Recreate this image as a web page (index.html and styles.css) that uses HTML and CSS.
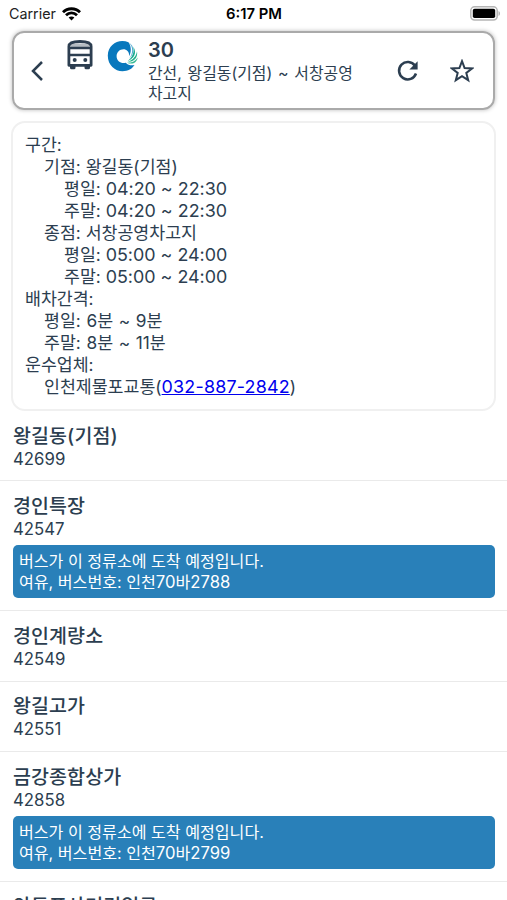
FILE: index.html
```html
<!DOCTYPE html>
<html lang="ko">
<head>
<meta charset="utf-8">
<title>30</title>
<link rel="stylesheet" href="styles.css">
</head>
<body>
<div class="status">
  <div class="carrier">Carrier
    <svg width="19" height="14" viewBox="0 0 19 14"><g fill="none" stroke="#000" stroke-width="2.8"><path d="M1 5.2C5.5.6 13.500.6 18 5.200"/><path d="M4 8.300c3.200-3.200 7.800-3.200 11 0"/></g><path d="M6.600 10.500c1.600-1.500 4.200-1.500 5.800 0L9.500 13.600z"/></svg>
  </div>
  <div class="clock">6:17 PM</div>
  <svg class="battery" width="31" height="15" viewBox="0 0 31 15"><rect x=".8" y=".8" width="26.400" height="13.200" rx="3.800" fill="#fff" stroke="#b5b5b5" stroke-width="1.500"/><rect x="2.800" y="2.800" width="22.400" height="9.200" rx="1.800"/><path d="M28.500 5c2 .7 2 4.300 0 5z" fill="#b5b5b5"/></svg>
</div>
<header class="header">
  <svg class="back" width="14" height="22" viewBox="0 0 14 22"><path d="M12 2 3 11l9 9" fill="none" stroke="#2c3e50" stroke-width="2.500"/></svg>
  <svg class="bus" width="26" height="30" viewBox="0 0 26 30"><path d="M3 24h5.500v3.800a1.500 1.500 0 0 1-1.500 1.500H4.500A1.500 1.500 0 0 1 3 27.800zM17.500 24H23v3.800a1.500 1.500 0 0 1-1.500 1.500H19a1.500 1.500 0 0 1-1.500-1.500z" fill="#2c3e50"/><path d="M1.900 25.300V6.500C1.900 2.800 5 1.500 13 1.500S24.100 2.800 24.100 6.500v18.800z" fill="#fff" stroke="#2c3e50" stroke-width="2.800" stroke-linejoin="round"/><path d="M4 5C6 3 20 3 22 5v2.500H4z" fill="#2c3e50" opacity=".35"/><path d="M2 8h22M2 15h22" stroke="#2c3e50" stroke-width="2.600"/><circle cx="7.700" cy="20" r="2" fill="#2c3e50"/><circle cx="18.300" cy="20" r="2" fill="#2c3e50"/></svg>
  <svg class="logo" width="32" height="32" viewBox="0 0 32 32"><path d="M21.500 2.200C12-1.800 1 4 .800 15.500.7 25 8 31.200 15.500 31.200c5.500 0 9.800-2.400 12-6.200-3.500.8-6.500 0-8.700-2.300-4.500 1.500-9.200-1.700-9.200-6.500 0-4.200 3.200-7 6.800-7 3.700 0 6.200 3 5.600 7 2.500-4 2.400-9.800-.5-14z" fill="#0878bd"/><path d="M21.500 2.200c4.800 4 5 11.500.2 16.800 6-5 6.500-12.800-.2-16.800z" fill="#4fa9cf"/><path d="M26.300 6.800c1.200 5.500-.8 10.500-5.600 14.200 6.500-2.400 9.500-8 5.600-14.200z" fill="#16a98f"/><path d="M30 11.200c-.8 4.800-3.800 8.600-9.500 10.800C27 22 31.200 17.500 30 11.200z" fill="#22b28b"/><path d="M30.800 17.500c-2.200 3.500-5.600 5.200-10.800 5.200 5.500 2.300 9.800 0 10.800-5.200z" fill="#39b995"/></svg>
  <div class="title">
    <h1>30</h1>
    <p>간선, 왕길동(기점) ~ 서창공영<br>차고지</p>
  </div>
  <svg class="refresh" width="22" height="22" viewBox="0 0 22 22"><path d="M18 5.800A8.700 8.700 0 1 0 19 13.500" fill="none" stroke="#2c3e50" stroke-width="2.500"/><path d="M20.600 1.200v8.200h-8.200z" fill="#2c3e50"/></svg>
  <svg class="star" width="24" height="24" viewBox="0 0 24 24"><path d="m12 2.200 2.600 6.900 7.400.4-5.700 4.500 1.900 7.200-6.200-4.100L5.800 21.200 7.700 14 2 9.500l7.400-.4z" fill="none" stroke="#2c3e50" stroke-width="2"/></svg>
</header>
<section class="info">
  <div>구간:</div>
  <div class="in1">기점: 왕길동(기점)</div>
  <div class="in2">평일: <span class="num">04:20 ~ 22:30</span></div>
  <div class="in2">주말: <span class="num">04:20 ~ 22:30</span></div>
  <div class="in1">종점: 서창공영차고지</div>
  <div class="in2">평일: <span class="num">05:00 ~ 24:00</span></div>
  <div class="in2">주말: <span class="num">05:00 ~ 24:00</span></div>
  <div>배차간격:</div>
  <div class="in1 gap">평일: 6분 ~ 9분</div>
  <div class="in1 gap">주말: 8분 ~ 11분</div>
  <div>운수업체:</div>
  <div class="in1">인천제물포교통(<a class="num" href="tel:032-887-2842">032-887-2842</a>)</div>
</section>
<ul class="stops">
  <li><h2>왕길동(기점)</h2><p class="id">42699</p></li>
  <li><h2>경인특장</h2><p class="id">42547</p><div class="alert">버스가 이 정류소에 도착 예정입니다.<br>여유, 버스번호: 인천<span class="num">70</span>바<span class="num">2788</span></div></li>
  <li><h2>경인계량소</h2><p class="id">42549</p></li>
  <li><h2>왕길고가</h2><p class="id">42551</p></li>
  <li><h2>금강종합상가</h2><p class="id">42858</p><div class="alert">버스가 이 정류소에 도착 예정입니다.<br>여유, 버스번호: 인천<span class="num">70</span>바<span class="num">2799</span></div></li>
  <li><h2>안동포사거리입구</h2></li>
</ul>
</body>
</html>
```
FILE: styles.css
```css
* { box-sizing: border-box; margin: 0; padding: 0; }
html, body { height: 900px; overflow: hidden; }
body { background: #fff; color: #2c3e50; font-family: Inter, "Noto Sans CJK KR", sans-serif; }
svg { display: block; flex: none; }
.status { display: grid; grid-template-columns: 1fr auto 1fr; align-items: center; height: 31px; padding: 0 6px 4px 9px; color: #000; font-size: 14.300px; }
.carrier { display: flex; align-items: center; gap: 6px; color: #222; }
.clock { margin-left: -2px; font-size: 14.800px; font-weight: 600; }
.battery { justify-self: end; }
.header { display: flex; height: 79px; margin: 0 12px; padding-left: 17px; border: 2px solid #aaa; border-radius: 12px; box-shadow: 0 0 4px #bbb; }
.back { margin: 27px 0 0 -1px; }
.bus { margin: 7px 0 0 23px; }
.logo { margin: 7px 0 0 14px; }
.title { width: 225px; margin: 5px 0 0 9px; white-space: nowrap; }
.title h1 { font-size: 20px; line-height: 25px; font-weight: 600; }
.title p { padding-top: 1px; font-size: 15.900px; line-height: 20px; word-spacing: 1.300px; }
.refresh { margin: 27px 0 0 24px; }
.star { margin: 26px 0 0 31px; }
.info { height: 290px; margin: 11px 11px 0; padding: 11px 12px; border: 2px solid #f0f0f0; border-radius: 14px; font-size: 17.300px; line-height: 22px; white-space: nowrap; }
.num { font-size: 1.035em; line-height: 1; }
.gap { word-spacing: .8px; }
.in1 { padding-left: 19px; }
.in2 { padding-left: 39px; }
.info a { color: #0000ee; letter-spacing: .2px; }
.stops { list-style: none; }
.stops li { padding: 13.500px 12px 11.900px 13px; border-bottom: 1px solid #eaeaea; }
.stops h2 { font-size: 19.500px; line-height: 23px; font-weight: 500; letter-spacing: .1px; }
.id { padding-top: 1px; font-size: 16.800px; line-height: 20px; }
.alert { height: 53px; margin-top: 6.500px; padding: 6px; border-radius: 5px; background: #2980b9; color: #fff; font-size: 16.100px; line-height: 20.500px; white-space: nowrap; }
```
